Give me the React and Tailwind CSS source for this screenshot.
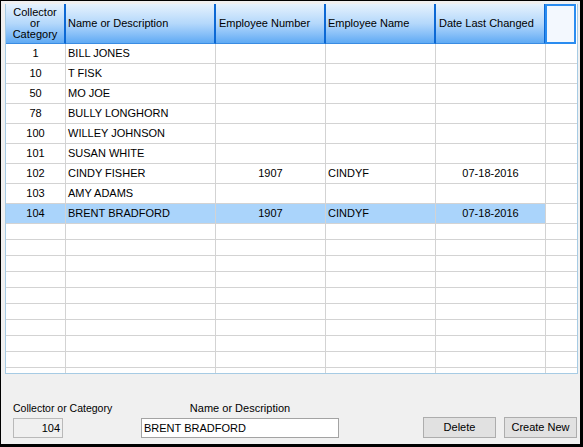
import React from "react";

const rows = [
  ["1", "BILL JONES", "", "", ""],
  ["10", "T FISK", "", "", ""],
  ["50", "MO JOE", "", "", ""],
  ["78", "BULLY LONGHORN", "", "", ""],
  ["100", "WILLEY JOHNSON", "", "", ""],
  ["101", "SUSAN WHITE", "", "", ""],
  ["102", "CINDY FISHER", "1907", "CINDYF", "07-18-2016"],
  ["103", "AMY ADAMS", "", "", ""],
  ["104", "BRENT BRADFORD", "1907", "CINDYF", "07-18-2016"],
];

function HeaderCell({ className, children }) {
  return (
    <div
      className={
        "h-full shrink-0 flex items-center border-r-2 border-b border-r-[#0c68d4] border-b-[#3a8ce2] bg-gradient-to-b from-[#e6f2fd] via-[#b4d8fb] to-[#5faaf4] " +
        className
      }
    >
      {children}
    </div>
  );
}

function DataRow({ r, selected }) {
  const sel = selected ? "bg-[#aad4fb]" : "bg-white";
  return (
    <div className="flex h-[20px] shrink-0 border-b border-[#d3d3d3]">
      <div className={"w-[60px] shrink-0 border-r border-[#d3d3d3] flex items-center justify-center " + sel}>{r[0]}</div>
      <div className={"w-[150px] shrink-0 border-r border-[#d3d3d3] flex items-center pl-[2px] " + sel}>{r[1]}</div>
      <div className={"w-[110px] shrink-0 border-r border-[#d3d3d3] flex items-center justify-center " + sel}>{r[2]}</div>
      <div className={"w-[110px] shrink-0 border-r border-[#d3d3d3] flex items-center pl-[2px] " + sel}>{r[3]}</div>
      <div className={"w-[110px] shrink-0 border-r border-[#d3d3d3] flex items-center justify-center " + sel}>{r[4]}</div>
      <div className="w-[31px] shrink-0 bg-white"></div>
    </div>
  );
}

function EmptyRow() {
  return (
    <div className="flex h-[16px] shrink-0 border-b border-[#d3d3d3] bg-white">
      <div className="w-[60px] shrink-0 border-r border-[#d3d3d3]"></div>
      <div className="w-[150px] shrink-0 border-r border-[#d3d3d3]"></div>
      <div className="w-[110px] shrink-0 border-r border-[#d3d3d3]"></div>
      <div className="w-[110px] shrink-0 border-r border-[#d3d3d3]"></div>
      <div className="w-[110px] shrink-0 border-r border-[#d3d3d3]"></div>
      <div className="w-[31px] shrink-0"></div>
    </div>
  );
}

export default function App() {
  return (
    <div className="w-[583px] h-[447px] bg-[#f0f0f0] border-l border-t border-r-[3px] border-b-[3px] border-black flex flex-col font-['Liberation_Sans',Arial,sans-serif] text-[11px] text-black overflow-hidden">
      {/* grid */}
      <div className="mt-[3px] ml-[4px] w-[573px] h-[370px] shrink-0 border-l border-r border-b border-[#a6cbe4] bg-white flex flex-col overflow-hidden">
        <div className="flex h-[40px] shrink-0">
          <HeaderCell className="w-[60px] justify-center text-center leading-[11px]">
            <div>Collector<br />or<br />Category</div>
          </HeaderCell>
          <HeaderCell className="w-[150px] pl-[2px]">Name or Description</HeaderCell>
          <HeaderCell className="w-[110px] pl-[3px]">Employee Number</HeaderCell>
          <HeaderCell className="w-[110px] pl-[2px]">Employee Name</HeaderCell>
          <HeaderCell className="w-[110px] pl-[3px]">Date Last Changed</HeaderCell>
          <div className="w-[31px] shrink-0 h-[40px] flex">
            <div className="w-full h-full border-2 border-[#2a8cf0] bg-[#f3f8fe] ml-[-1px]"></div>
          </div>
        </div>
        {rows.map((r, i) => (
          <DataRow key={i} r={r} selected={i === 8} />
        ))}
        {Array.from({ length: 10 }).map((_, i) => (
          <EmptyRow key={"e" + i} />
        ))}
      </div>

      {/* bottom */}
      <div className="flex-1 flex items-end pb-[6px]">
        <div className="ml-[12px] w-[50px] shrink-0 flex flex-col items-start">
          <div className="whitespace-nowrap leading-[13px] text-[10.5px]">Collector or Category</div>
          <div className="mt-[3px] w-[50px] h-[20px] border border-[#b9b9b9] bg-[#f0f0f0] flex items-center justify-end pr-[2px]">104</div>
        </div>
        <div className="ml-[78px] w-[198px] shrink-0 flex flex-col items-center">
          <div className="whitespace-nowrap leading-[13px]">Name or Description</div>
          <div className="mt-[3px] w-[198px] h-[20px] border border-[#a3a3a3] bg-white flex items-center pl-[2px]">BRENT BRADFORD</div>
        </div>
        <button className="ml-[84px] w-[73px] h-[21px] shrink-0 border border-[#adadad] bg-[#e1e1e1] flex items-center justify-center text-[11px] text-black whitespace-nowrap">Delete</button>
        <button className="ml-[8px] w-[73px] h-[21px] shrink-0 border border-[#adadad] bg-[#e1e1e1] flex items-center justify-center text-[11px] text-black whitespace-nowrap">Create New</button>
      </div>
    </div>
  );
}
